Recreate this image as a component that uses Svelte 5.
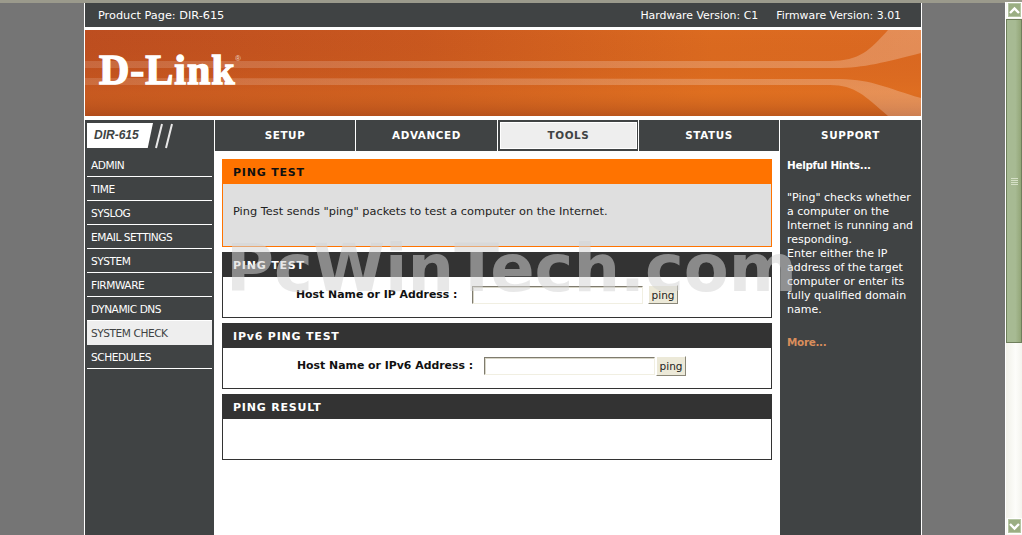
<script>
  const side = ['ADMIN','TIME','SYSLOG','EMAIL SETTINGS','SYSTEM','FIRMWARE','DYNAMIC DNS','SYSTEM CHECK','SCHEDULES'];
  const tabs = ['SETUP','ADVANCED','TOOLS','STATUS','SUPPORT'];
</script>

<div class="root">
  <div class="strip"></div>
  <div class="row">
    <div class="page">
      <div class="topbar">
        <span>Product Page: DIR-615</span>
        <span class="ver"><span>Hardware Version: C1</span><span>Firmware Version: 3.01</span></span>
      </div>
      <div class="banner">
        <svg width="836" height="86" viewBox="0 0 836 86" preserveAspectRatio="none">
          <defs>
            <linearGradient id="bg" x1="0" x2="1" y1="0" y2="0">
              <stop offset="0" stop-color="#bd4e20"/>
              <stop offset="0.4" stop-color="#c9581f"/>
              <stop offset="0.75" stop-color="#dc6b20"/>
              <stop offset="1" stop-color="#dc6a22"/>
            </linearGradient>
            <linearGradient id="sh" x1="0" x2="0" y1="0" y2="1">
              <stop offset="0" stop-color="#b04010" stop-opacity="0"/>
              <stop offset="0.72" stop-color="#e67a20" stop-opacity="0.25"/>
              <stop offset="1" stop-color="#a84a18" stop-opacity="0.6"/>
            </linearGradient>
            <linearGradient id="st" x1="0" x2="1" y1="0" y2="0">
              <stop offset="0" stop-color="#fff" stop-opacity="0.14"/>
              <stop offset="0.6" stop-color="#fff" stop-opacity="0.2"/>
              <stop offset="1" stop-color="#fff" stop-opacity="0.24"/>
            </linearGradient>
          </defs>
          <rect width="836" height="86" fill="url(#bg)"/>
          <rect width="836" height="86" fill="url(#sh)"/>
          <path fill="url(#st)" d="M0,31 L745,31 C775,31 785,20 803,0 L836,0 L836,23 C800,32 780,38 750,38 L0,38 Z"/>
          <path fill="url(#st)" d="M0,48 L755,49 C790,50 800,58 836,68 L836,86 L803,86 C780,66 770,55 745,55 L0,55 Z"/>
        </svg>
        <span class="logo">D-Link<sup>®</sup></span>
      </div>
      <div class="nav">
        <div class="model">
          <span class="plate">DIR-615</span>
          <svg class="slashes" width="20" height="26" viewBox="0 0 20 26"><path d="M7,1 L1,25 M17,1 L11,25" stroke="#e8e8e8" stroke-width="2" fill="none"/></svg>
        </div>
        {#each tabs as t}
          <div class="tab" class:on={t === 'TOOLS'}><span>{t}</span></div>
        {/each}
      </div>
      <div class="main">
        <aside class="side">
          {#each side as s}
            <div class="item" class:cur={s === 'SYSTEM CHECK'}>{s}</div>
          {/each}
        </aside>
        <section class="content">
          <div class="box intro">
            <h2>PING TEST</h2>
            <p>Ping Test sends "ping" packets to test a computer on the Internet.</p>
          </div>
          <div class="box">
            <h2>PING TEST</h2>
            <div class="form f1">
              <label for="a">Host Name or IP Address :</label>
              <input id="a" type="text" />
              <button>ping</button>
            </div>
          </div>
          <div class="box">
            <h2>IPv6 PING TEST</h2>
            <div class="form f2">
              <label for="b">Host Name or IPv6 Address :</label>
              <input id="b" type="text" />
              <button>ping</button>
            </div>
          </div>
          <div class="box">
            <h2>PING RESULT</h2>
            <div class="form"></div>
          </div>
          <div class="mark">PcWinTech.com</div>
        </section>
        <aside class="help">
          <b class="hint">Helpful Hints...</b>
          <p>"Ping" checks whether a computer on the Internet is running and responding.<br/>Enter either the IP address of the target computer or enter its fully qualified domain name.</p>
          <b class="more">More...</b>
        </aside>
      </div>
    </div>
    <div class="gap"></div>
    <div class="sb">
      <div class="btn"><svg width="11" height="9" viewBox="0 0 11 9"><path d="M1,7 L5.5,2.5 L10,7" stroke="#fff" stroke-width="2.4" fill="none"/></svg></div>
      <div class="thumb"><i></i><i></i><i></i><i></i></div>
      <div class="track"></div>
      <div class="btn"><svg width="11" height="9" viewBox="0 0 11 9"><path d="M1,2 L5.5,6.5 L10,2" stroke="#fff" stroke-width="2.4" fill="none"/></svg></div>
    </div>
  </div>
</div>

<style>
  :global(body) { margin: 0; background: #757575; overflow: hidden; }
  .root { height: 535px; display: flex; flex-direction: column; font-family: "DejaVu Sans", sans-serif; font-size: 11px; }
  .strip { height: 3px; background: #9b9a8c; flex: none; }
  .row { flex: 1; display: flex; min-height: 0; padding-left: 84px; }
  .page { width: 836px; flex: none; border: solid #fff; border-width: 0 1px; background: #fff; height: 532px; }
  .gap { width: 83px; flex: none; }
  .topbar { height: 24px; background: #404344; color: #fff; display: flex; justify-content: space-between; align-items: center; padding: 0 20px 0 13px; font-size: 11.3px; }
  .ver { display: flex; gap: 18px; font-size: 10.9px; }
  .banner { margin-top: 3px; height: 86px; position: relative; }
  .banner svg { display: block; }
  .logo { position: absolute; left: 14px; top: 16px; color: #fff; font: bold 42px/48px "Liberation Serif", serif; -webkit-text-stroke: 1.4px #fff; letter-spacing: 1px; }
  .logo sup { font: 8px "Liberation Sans", sans-serif; -webkit-text-stroke: 0; position: absolute; left: 136px; top: 8px; opacity: .7; letter-spacing: 0; }
  .nav { margin-top: 4px; height: 29px; display: grid; grid-template-columns: 129px 140px 141px 140px 140px 141px; column-gap: 1px; }
  .model { background: #404344; display: flex; align-items: center; padding-left: 2px; }
  .plate { width: 66px; height: 25px; box-sizing: border-box; background: #fff; color: #404344; font: italic bold 12px/25px "Liberation Sans", sans-serif; padding-left: 7px; clip-path: polygon(0 0, 100% 0, 92% 100%, 0 100%); }
  .slashes { margin-left: 2px; }
  .tab { background: #404344; color: #fff; display: flex; align-items: center; justify-content: center; font-weight: bold; font-size: 10.4px; letter-spacing: .6px; box-sizing: border-box; padding-bottom: 1px; }
  .tab.on { margin: 0; padding: 2px 1px 2px 2px; }
  .tab.on span { flex: 1; height: 100%; box-sizing: border-box; border: 1px solid #fff; background: #eee; color: #404344; text-align: center; line-height: 25px; }
  .main { margin-top: 2px; display: grid; grid-template-columns: 129px 564px 141px; column-gap: 1px; height: 384px; }
  .side { background: #404344; padding: 2px 2px 0; }
  .item { height: 23px; line-height: 25px; border-bottom: 1px solid #fff; color: #fff; padding-left: 4px; font-size: 10.6px; letter-spacing: -0.45px; }
  .item.cur { background: #eee; color: #404344; border-bottom: 1px solid #eee; }
  .content { padding: 8px 7px 0 7px; display: flex; flex-direction: column; gap: 5px; position: relative; }
  .box { border: 1px solid #333; background: #fff; }
  .box h2 { margin: -1px -1px 0; height: 25px; background: #333; color: #fff; font-size: 11px; line-height: 28px; font-weight: bold; letter-spacing: .8px; padding-left: 11px; }
  .intro { border-color: #ff7300; background: #dfdfdf; }
  .intro h2 { background: #ff7300; color: #111; }
  .intro p { margin: 0; height: 62px; box-sizing: border-box; padding: 19px 10px 0; color: #222; font-size: 11.35px; line-height: 16px; }
  .form { height: 40px; display: flex; align-items: flex-start; padding-top: 9px; color: #111; font-size: 10.9px; font-weight: bold; box-sizing: border-box; }
  .f1 { padding-left: 73px; }
  .f2 { padding-left: 74px; }
  label { white-space: nowrap; line-height: 18px; }
  .f1 label { width: 176px; }
  .f2 label { width: 187px; }
  input { width: 171px; height: 18px; box-sizing: border-box; border: 1px solid; border-color: #7f7b6e #f1efe2 #f1efe2 #7f7b6e; box-shadow: inset 1px 1px 0 #d8d6c8; background: #fff; padding: 0; margin: 0; }
  button { width: 30px; height: 19px; box-sizing: border-box; background: #ece9d8; border: 1px solid; border-color: #fff #8a8778 #8a8778 #fff; padding: 0; color: #222; font: 10.5px "DejaVu Sans", sans-serif; margin: -1px 0 0 5px; }
  .f2 button { margin-left: 1px; height: 20px; }
  .mark { position: absolute; left: 11px; top: 85px; font: bold 65.5px/64px "DejaVu Sans", sans-serif; color: rgba(212, 212, 212, .54); white-space: nowrap; pointer-events: none; }
  .help { background: #404344; color: #fff; padding: 7px 3px 0 7px; font-size: 11px; line-height: 14px; }
  .hint, .more { font-size: 10.4px; letter-spacing: -.3px; }
  .help p { margin: 18px 0 18px; }
  .more { color: #d98e5c; }
  .sb { width: 17px; flex: none; margin-top: -1px; height: 533px; display: flex; flex-direction: column; background: #f7f7f1; box-sizing: border-box; padding: 0 0 1px; border-left: 1px solid #fff; }
  .btn { height: 16px; flex: none; background: #9bae83; border: 1px solid #fff; box-shadow: inset 0 0 0 1px #b6c6a4; box-sizing: border-box; display: flex; align-items: center; justify-content: center; margin: 0 0 0 1px; }
  .thumb { height: 324px; flex: none; margin-top: 1px; box-sizing: border-box; border: 1px solid #6f7f5c; background: linear-gradient(90deg, #a7ba93 0 60%, #93a678 100%); display: flex; flex-direction: column; align-items: center; justify-content: center; gap: 1px; }
  .thumb i { display: block; width: 7px; height: 1px; background: #d5e0c6; }
  .track { flex: 1; background: linear-gradient(90deg, #f1f1e9, #fdfdfa 60%, #f4f4ee); }
</style>
